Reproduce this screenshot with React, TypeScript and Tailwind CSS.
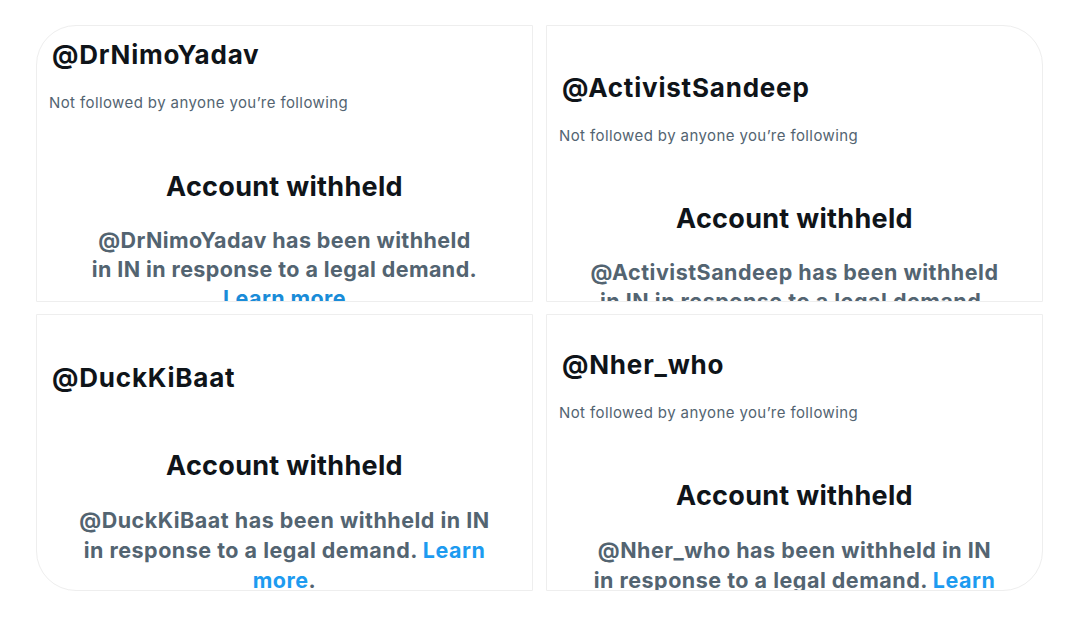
const font = { fontFamily: 'Inter, "Liberation Sans", sans-serif' };

function Handle({ name }: { name: string }) {
  return <div className="text-[26px] font-bold leading-[30px] tracking-[0.8px] text-[#0f1419]">@{name}</div>;
}

function NotFollowed() {
  return (
    <div className="mt-[23px] -ml-[3px] text-[15px] leading-[20px] tracking-[0.4px] text-[#536471]">
      Not followed by anyone you’re following
    </div>
  );
}

function Withheld() {
  return <div className="text-center text-[27px] font-bold leading-[32px] tracking-[0.3px] text-[#0f1419]">Account withheld</div>;
}

export default function App() {
  return (
    <div className="min-h-screen bg-white pt-[25px] pl-[36px]" style={font}>
      <div className="grid w-[1007px] grid-cols-2 gap-x-[13px] gap-y-[12px]">
        {/* top left */}
        <div className="h-[277px] overflow-hidden rounded-tl-[40px] border border-[#eeeeee] bg-white pl-[15px] pt-[14px]">
          <Handle name="DrNimoYadav" />
          <NotFollowed />
          <div className="-ml-[15px] mt-[58px]">
            <Withheld />
            <div className="mt-[23px] text-center text-[21.5px] font-bold leading-[29px] tracking-[0.4px] text-[#536471]">
              @DrNimoYadav has been withheld
              <br />
              in IN in response to a legal demand.
              <br />
              <span className="text-[#1a8cd8]">Learn more</span>
            </div>
          </div>
        </div>

        {/* top right */}
        <div className="h-[277px] overflow-hidden rounded-tr-[40px] border border-[#eeeeee] bg-white pl-[15px] pt-[47px]">
          <Handle name="ActivistSandeep" />
          <NotFollowed />
          <div className="-ml-[15px] mt-[57px]">
            <Withheld />
            <div className="mt-[23px] text-center text-[21.5px] font-bold leading-[29px] tracking-[0.5px] text-[#536471]">
              @ActivistSandeep has been withheld
              <br />
              in IN in response to a legal demand.
            </div>
          </div>
        </div>

        {/* bottom left */}
        <div className="h-[277px] overflow-hidden rounded-bl-[40px] border border-[#eeeeee] bg-white pl-[15px] pt-[48px]">
          <Handle name="DuckKiBaat" />
          <div className="-ml-[15px] mt-[57px]">
            <Withheld />
            <div className="mt-[23px] text-center text-[21.5px] font-bold leading-[30px] tracking-[0.5px] text-[#536471]">
              @DuckKiBaat has been withheld in IN
              <br />
              in response to a legal demand. <span className="text-[#1d9bf0]">Learn</span>
              <br />
              <span className="text-[#1d9bf0]">more</span>.
            </div>
          </div>
        </div>

        {/* bottom right */}
        <div className="h-[277px] overflow-hidden rounded-br-[40px] border border-[#eeeeee] bg-white pl-[15px] pt-[35px]">
          <Handle name="Nher_who" />
          <NotFollowed />
          <div className="-ml-[15px] mt-[57px]">
            <Withheld />
            <div className="mt-[23px] text-center text-[21.5px] font-bold leading-[30px] tracking-[0.5px] text-[#536471]">
              @Nher_who has been withheld in IN
              <br />
              in response to a legal demand. <span className="text-[#1d9bf0]">Learn</span>
              <br />
              <span className="text-[#1d9bf0]">more</span>.
            </div>
          </div>
        </div>
      </div>
    </div>
  );
}
